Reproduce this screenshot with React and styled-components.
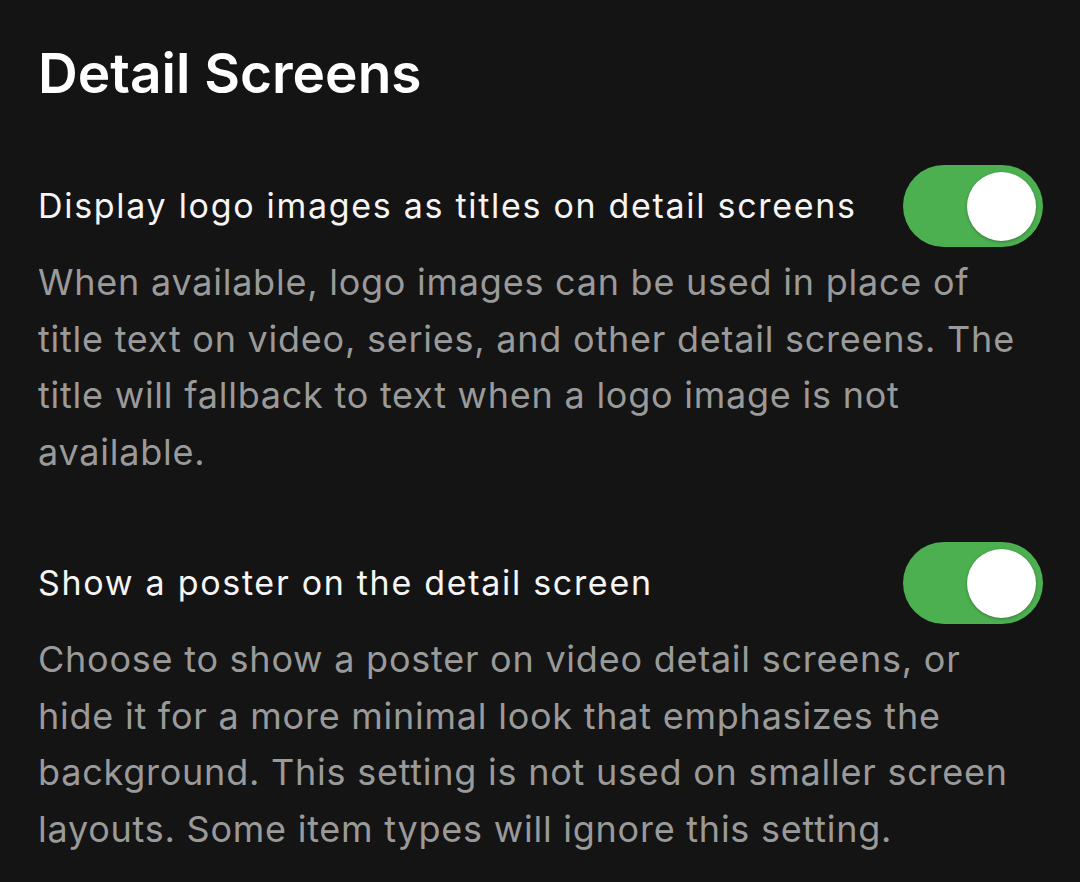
import React, { useState } from "react"
import styled, { createGlobalStyle } from "styled-components"

const GlobalStyle = createGlobalStyle`
  html, body {
    margin: 0;
    padding: 0;
    background: #141414;
  }
  body {
    font-family: Inter, "Noto Sans", sans-serif;
    -webkit-font-smoothing: antialiased;
  }
`

const Page = styled.div`
  min-height: 882px;
  background: #141414;
  padding: 39px 37px 0 38px;
  box-sizing: border-box;
`

const Title = styled.h1`
  margin: 0 0 58px 0;
  font-size: 55px;
  font-weight: 600;
  line-height: 68px;
  color: #ffffff;
`

const Setting = styled.div`
  margin-bottom: 62px;
`

const SettingRow = styled.div`
  display: flex;
  align-items: center;
  justify-content: space-between;
  gap: 24px;
`

const Label = styled.div`
  font-size: 34px;
  line-height: 48px;
  letter-spacing: 1.7px;
  color: #f5f5f5;
`

const Description = styled.p`
  margin: 7px 0 0 0;
  font-size: 36px;
  line-height: 56.5px;
  letter-spacing: 0.76px;
  color: #9a9a9a;
`

const Track = styled.button`
  flex: 0 0 auto;
  width: 140px;
  height: 82px;
  border: none;
  border-radius: 41px;
  padding: 0 7px;
  background: ${(p) => (p.$on ? "#4caf50" : "#555")};
  display: flex;
  align-items: center;
  justify-content: ${(p) => (p.$on ? "flex-end" : "flex-start")};
  cursor: pointer;
`

const Knob = styled.span`
  width: 69px;
  height: 69px;
  border-radius: 50%;
  background: #ffffff;
  box-shadow: 0 1px 3px rgba(0, 0, 0, 0.3);
`

function Toggle({ defaultOn }) {
  const [on, setOn] = useState(defaultOn)
  return (
    <Track $on={on} onClick={() => setOn(!on)}>
      <Knob />
    </Track>
  )
}

const settings = [
  {
    label: "Display logo images as titles on detail screens",
    text:
      "When available, logo images can be used in place of title text on video, series, and other detail screens. The title will fallback to text when a logo image is not available.",
  },
  {
    label: "Show a poster on the detail screen",
    text:
      "Choose to show a poster on video detail screens, or hide it for a more minimal look that emphasizes the background. This setting is not used on smaller screen layouts. Some item types will ignore this setting.",
  },
]

export default function App() {
  return (
    <>
      <GlobalStyle />
      <Page>
        <Title>Detail Screens</Title>
        {settings.map((s) => (
          <Setting key={s.label}>
            <SettingRow>
              <Label>{s.label}</Label>
              <Toggle defaultOn />
            </SettingRow>
            <Description>{s.text}</Description>
          </Setting>
        ))}
      </Page>
    </>
  )
}
